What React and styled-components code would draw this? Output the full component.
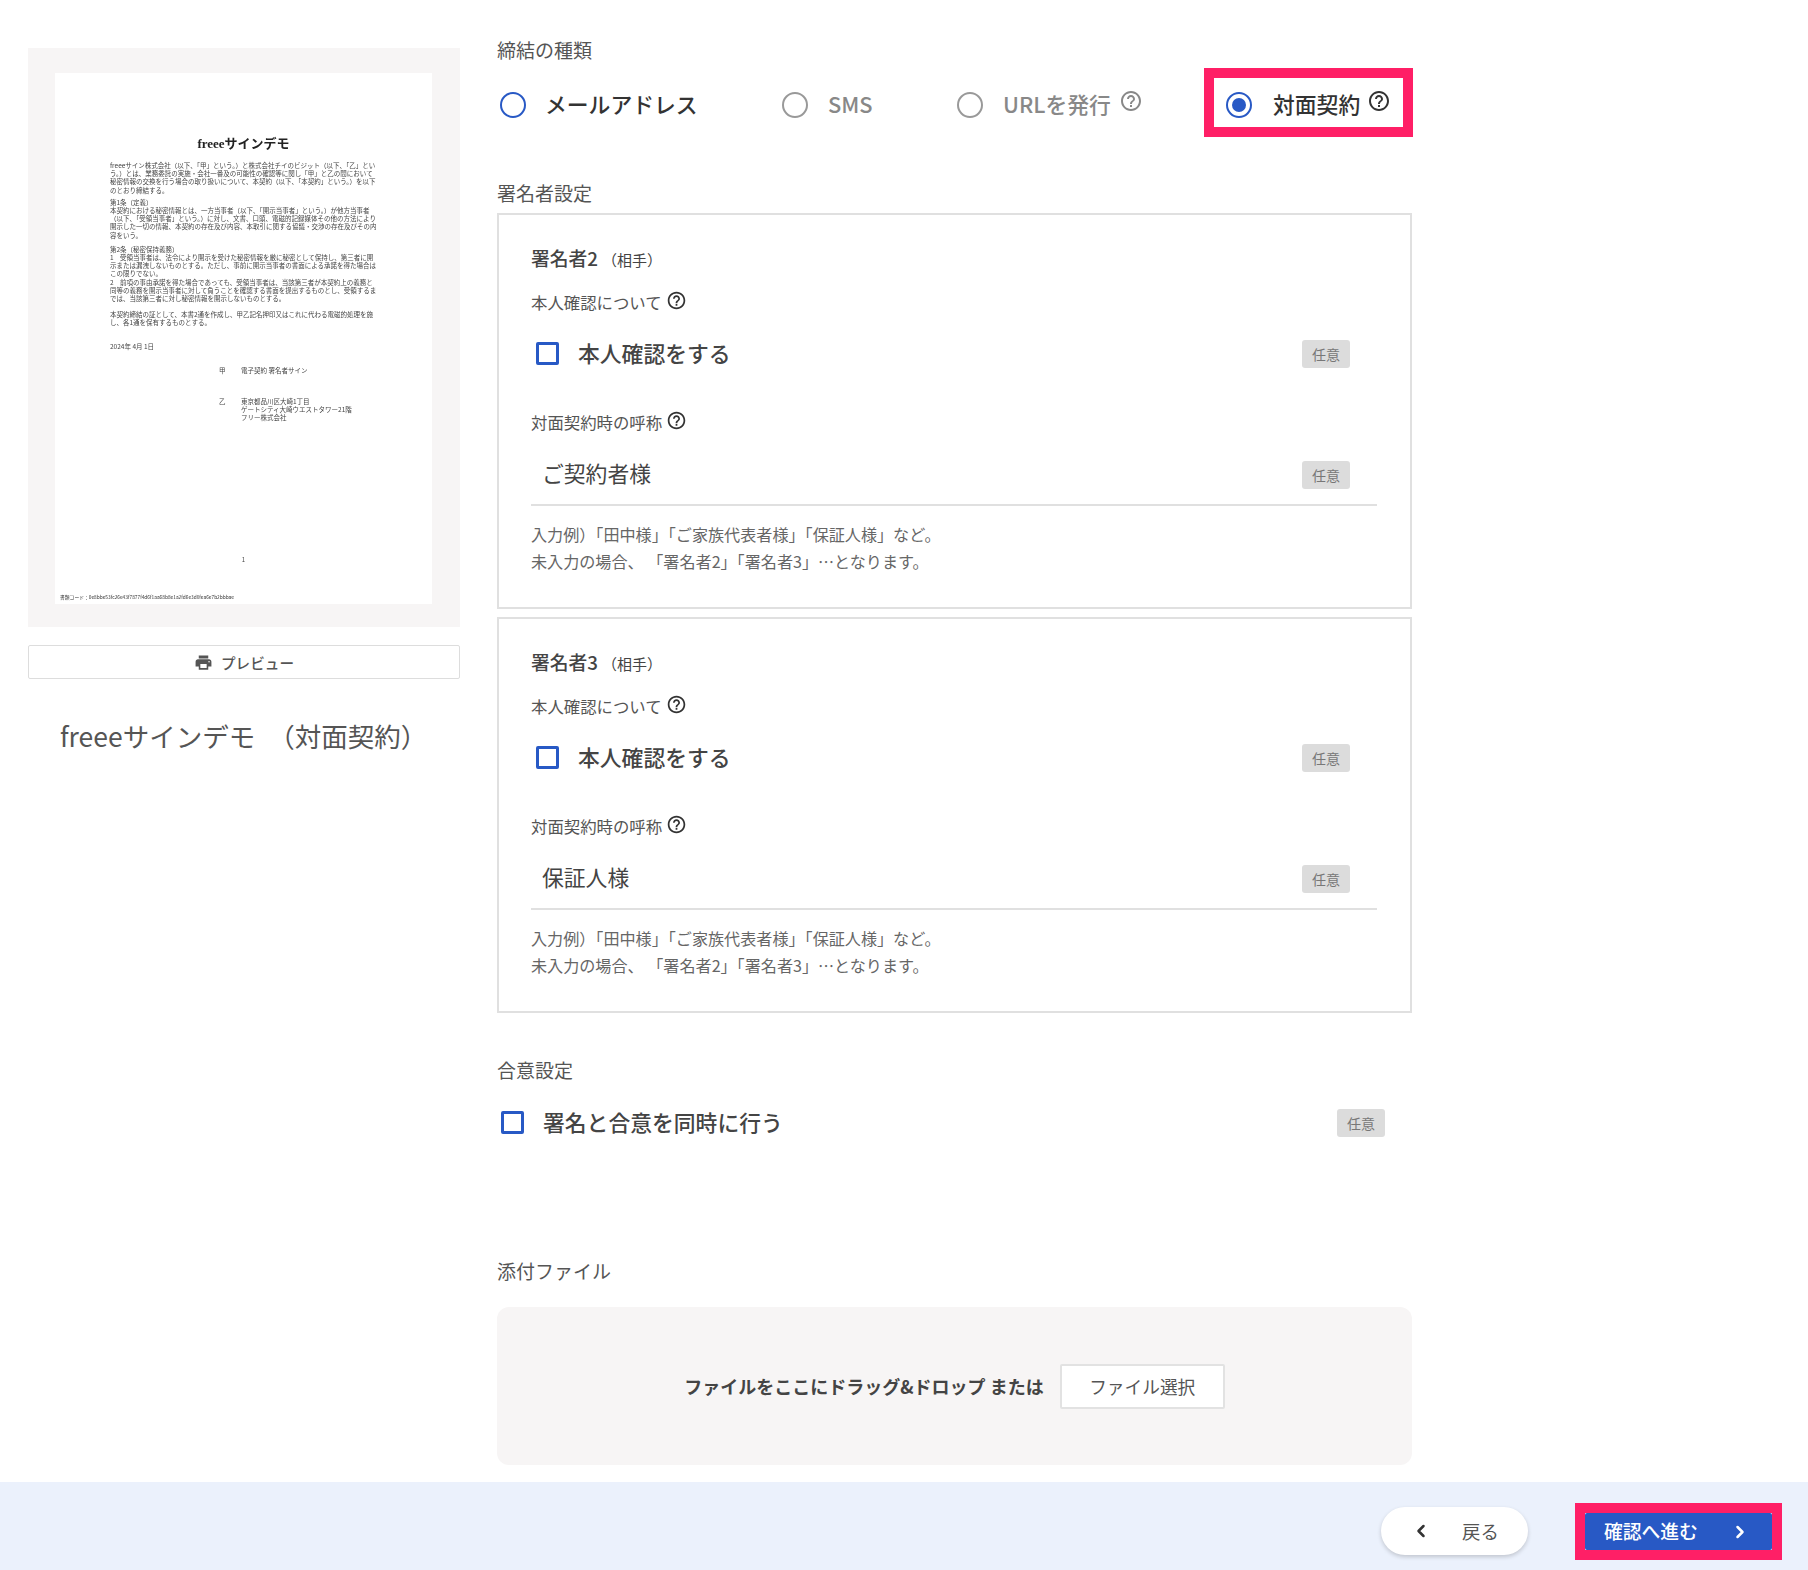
import styled, { createGlobalStyle } from "styled-components";
import { MdHelpOutline, MdPrint } from "react-icons/md";
import { ChevronLeft, ChevronRight } from "lucide-react";

const GlobalStyle = createGlobalStyle`
  html, body { margin: 0; padding: 0; background: #fff; }
  body { font-family: "Noto Sans CJK JP", "Noto Sans", sans-serif; color: #333; }
  * { box-sizing: border-box; }
`;

const Page = styled.div`
  width: 1808px;
  height: 1570px;
  display: flex;
  flex-direction: column;
  overflow: hidden;
`;
const Main = styled.main`
  height: 1482px;
  display: flex;
  gap: 37px;
  padding-left: 28px;
`;
const LeftCol = styled.aside`
  width: 432px;
  padding-top: 48px;
`;
const PreviewPanel = styled.div`
  height: 579px;
  padding: 25px 28px 23px 27px;
  background: #f7f5f5;
`;
const DocPage = styled.div`
  height: 100%;
  display: flex;
  flex-direction: column;
  padding: 64px 55px 4px 55px;
  background: #fff;
  font-size: 6.5px;
  line-height: 8.2px;
  color: #444;
  filter: blur(0.4px);
`;
const DocTitle = styled.div`
  font-family: "Liberation Serif", "Noto Sans CJK JP", serif;
  font-weight: 700;
  font-size: 13px;
  line-height: 14px;
  text-align: center;
  color: #222;
  margin-bottom: 10px;
`;
const DocPara = styled.p`
  margin: 0 0 ${(p) => p.$after}px;
`;
const DocSign = styled.div`
  display: grid;
  grid-template-columns: 22px 1fr;
  margin: ${(p) => p.$top}px 0 0 109px;
`;
const DocNumber = styled.div`
  margin-top: auto;
  text-align: center;
  font-size: 6px;
`;
const DocCode = styled.div`
  margin: 30px 0 0 -50px;
  font-size: 4.8px;
  line-height: 6px;
  white-space: nowrap;
  color: #333;
`;
const PreviewButton = styled.button`
  width: 100%;
  height: 34px;
  margin-top: 18px;
  display: flex;
  align-items: center;
  justify-content: center;
  gap: 8px;
  background: #fff;
  border: 1px solid #ddd;
  border-radius: 2px;
  font-family: inherit;
  font-size: 14.6px;
  font-weight: 500;
  color: #555;
`;
const DocName = styled.h1`
  margin: 39px 0 0 32px;
  font-size: 26.5px;
  line-height: 36px;
  font-weight: 400;
  color: #555;
  white-space: nowrap;
  span {
    margin-left: 13px;
  }
`;

const RightCol = styled.section`
  width: 915px;
  padding-top: 38px;
`;
const SectionLabel = styled.div`
  font-size: 19px;
  line-height: 24px;
  color: #555;
  margin-top: ${(p) => p.$top || 0}px;
`;
const RadioRow = styled.div`
  display: grid;
  grid-template-columns: 282px 175px 247px 209px;
  height: 69px;
  margin-top: 6px;
  padding-left: 3px;
`;
const RadioItem = styled.label`
  display: flex;
  align-items: center;
  gap: ${(p) => (p.$muted ? 20 : 19)}px;
  padding-top: 5px;
  font-size: 21.8px;
  font-weight: 500;
  color: ${(p) => (p.$muted ? "#888" : "#333")};
  white-space: nowrap;
`;
const HighlightRadio = styled(RadioItem)`
  padding: 4px 0 0 12px;
  gap: 21px;
  border: 10px solid #ff1f66;
`;
const RadioText = styled.span`
  margin-top: -3px;
`;
const RadioDot = styled.span`
  width: 26px;
  height: 26px;
  flex: none;
  display: flex;
  align-items: center;
  justify-content: center;
  border-radius: 50%;
  border: 2.5px solid ${(p) => (p.$muted ? "#999" : "#2859c5")};
  &::after {
    content: "";
    display: ${(p) => (p.$on ? "block" : "none")};
    width: 14px;
    height: 14px;
    border-radius: 50%;
    background: #2859c5;
  }
`;
const HelpIcon = styled(MdHelpOutline)`
  flex: none;
  margin: -8px 0 0 ${(p) => p.$gap}px;
  color: ${(p) => (p.$muted ? "#888" : "#333")};
`;
const SignerCard = styled.div`
  height: 396px;
  margin-top: 8px;
  padding: 30px 33px 0 32px;
  border: 2px solid #e0e0e0;
`;
const SignerTitle = styled.div`
  font-size: 18.8px;
  line-height: 26px;
  font-weight: 500;
  color: #444;
  small {
    font-size: 15px;
    font-weight: 400;
    margin-left: 4px;
  }
`;
const FieldLabel = styled.div`
  display: flex;
  align-items: center;
  height: 22px;
  margin-top: ${(p) => p.$top}px;
  font-size: 16.4px;
  color: #555;
  svg {
    margin: -4px 0 0 4px;
    color: #333;
  }
`;
const CheckRow = styled.div`
  display: flex;
  align-items: center;
  height: 40px;
  margin-top: ${(p) => p.$top}px;
  padding: 0 ${(p) => p.$right}px 0 ${(p) => p.$left}px;
  font-size: 21.8px;
  font-weight: 500;
  color: #444;
`;
const CheckBox = styled.span`
  width: 23px;
  height: 23px;
  flex: none;
  margin: 2px 19px 0 0;
  border: 3px solid #2859c5;
  border-radius: 2px;
`;
const OptionalTag = styled.span`
  width: 48px;
  height: 28px;
  flex: none;
  margin: 4px 0 0 auto;
  display: flex;
  align-items: center;
  justify-content: center;
  background: #dcdcdc;
  border-radius: 3px;
  font-size: 14px;
  font-weight: 400;
  color: #777;
`;
const InputRow = styled.div`
  display: flex;
  align-items: center;
  height: 62px;
  margin-top: 11px;
  padding: 0 27px 3px 11px;
  border-bottom: 2px solid #e0e0e0;
  font-size: 21.8px;
  color: #444;
`;
const HelpText = styled.p`
  margin: 15px 0 0;
  font-size: 16.1px;
  line-height: 27px;
  color: #666;
`;
const DropZone = styled.div`
  height: 158px;
  margin-top: 24px;
  display: flex;
  align-items: center;
  justify-content: center;
  gap: 16px;
  background: #f7f5f5;
  border-radius: 12px;
  font-size: 18px;
  font-weight: 700;
  color: #444;
`;
const SelectButton = styled.button`
  width: 165px;
  height: 45px;
  background: #fff;
  border: 2px solid #e2e2e2;
  border-radius: 2px;
  font-family: inherit;
  font-size: 17.7px;
  color: #555;
`;

const Footer = styled.footer`
  height: 88px;
  display: flex;
  justify-content: flex-end;
  align-items: flex-start;
  gap: 47px;
  padding: 21px 26px 0 0;
  background: #ebf1fc;
`;
const BackButton = styled.button`
  width: 147px;
  height: 48px;
  margin-top: 4px;
  display: flex;
  align-items: center;
  padding: 0 0 0 30px;
  gap: 31px;
  background: #fff;
  border: none;
  border-radius: 24px;
  box-shadow: 0 2px 4px rgba(0, 0, 0, 0.18);
  font-family: inherit;
  font-size: 18.4px;
  color: #555;
`;
const NextFrame = styled.div`
  width: 207px;
  height: 57px;
  border: 10px solid #ff1f66;
`;
const NextButton = styled.button`
  width: 100%;
  height: 100%;
  display: flex;
  align-items: center;
  justify-content: space-between;
  padding: 0 22px 3px 19px;
  background: #2859c5;
  border: none;
  border-radius: 2px;
  font-family: inherit;
  font-size: 18.8px;
  font-weight: 500;
  color: #fff;
  svg {
    margin-top: 3px;
  }
`;

const SignerBlock = ({ num, name }) => (
  <SignerCard>
    <SignerTitle>署名者{num}<small>（相手）</small></SignerTitle>
    <FieldLabel $top={18}>本人確認について<MdHelpOutline size={21} /></FieldLabel>
    <CheckRow $top={19} $left={5} $right={27}>
      <CheckBox />本人確認をする<OptionalTag>任意</OptionalTag>
    </CheckRow>
    <FieldLabel $top={39}>対面契約時の呼称<MdHelpOutline size={21} /></FieldLabel>
    <InputRow>{name}<OptionalTag>任意</OptionalTag></InputRow>
    <HelpText>
      入力例）「田中様」「ご家族代表者様」「保証人様」など。<br />
      未入力の場合、 「署名者2」「署名者3」…となります。
    </HelpText>
  </SignerCard>
);

const App = () => (
  <Page>
    <GlobalStyle />
    <Main>
      <LeftCol>
        <PreviewPanel>
          <DocPage>
            <DocTitle>freeeサインデモ</DocTitle>
            <DocPara $after={4}>
              freeeサイン株式会社（以下、「甲」という。）と株式会社チイのビジット（以下、「乙」という。）とは、業務委託の実施・会社一番及の可能性の確認等に関し「甲」と乙の間において秘密情報の交換を行う場合の取り扱いについて、本契約（以下、「本契約」という。）を以下のとおり締結する。
            </DocPara>
            <DocPara $after={6}>
              第1条（定義）<br />
              　本契約における秘密情報とは、一方当事者（以下、「開示当事者」という。）が他方当事者（以下、「受領当事者」という。）に対し、文書、口頭、電磁的記録媒体その他の方法により開示した一切の情報、本契約の存在及び内容、本取引に関する協議・交渉の存在及びその内容をいう。
            </DocPara>
            <DocPara $after={8}>
              第2条（秘密保持義務）<br />
              1　受領当事者は、法令により開示を受けた秘密情報を厳に秘密として保持し、第三者に開示または漏洩しないものとする。ただし、事前に開示当事者の書面による承諾を得た場合はこの限りでない。<br />
              2　前項の事由承諾を得た場合であっても、受領当事者は、当該第三者が本契約上の義務と同等の義務を開示当事者に対して負うことを確認する書面を提出するものとし、受領するまでは、当該第三者に対し秘密情報を開示しないものとする。
            </DocPara>
            <DocPara $after={15}>
              本契約締結の証として、本書2通を作成し、甲乙記名押印又はこれに代わる電磁的処理を施し、各1通を保有するものとする。
            </DocPara>
            <DocPara $after={7}>2024年 4月 1日</DocPara>
            <DocSign $top={9}><span>甲</span><span>電子契約 署名者サイン</span></DocSign>
            <DocSign $top={23}>
              <span>乙</span>
              <span>東京都品川区大崎1丁目<br />ゲートシティ大崎ウエストタワー21階<br />フリー株式会社</span>
            </DocSign>
            <DocNumber>1</DocNumber>
            <DocCode>書類コード：0e8bbe53fc26e43f7877f4d6f1aa68b8e1a2fd6e3d0fea6e7b2bbbae</DocCode>
          </DocPage>
        </PreviewPanel>
        <PreviewButton><MdPrint size={19} />プレビュー</PreviewButton>
        <DocName>freeeサインデモ<span>（対面契約）</span></DocName>
      </LeftCol>

      <RightCol>
        <SectionLabel>締結の種類</SectionLabel>
        <RadioRow>
          <RadioItem><RadioDot /><RadioText>メールアドレス</RadioText></RadioItem>
          <RadioItem $muted><RadioDot $muted /><RadioText>SMS</RadioText></RadioItem>
          <RadioItem $muted>
            <RadioDot $muted /><RadioText>URLを発行</RadioText><HelpIcon $muted size={24} $gap={-12} />
          </RadioItem>
          <HighlightRadio>
            <RadioDot $on /><RadioText>対面契約</RadioText><HelpIcon size={24} $gap={-14} />
          </HighlightRadio>
        </RadioRow>

        <SectionLabel $top={44}>署名者設定</SectionLabel>
        <SignerBlock num={2} name="ご契約者様" />
        <SignerBlock num={3} name="保証人様" />

        <SectionLabel $top={45}>合意設定</SectionLabel>
        <CheckRow $top={19} $left={4} $right={27}>
          <CheckBox />署名と合意を同時に行う<OptionalTag>任意</OptionalTag>
        </CheckRow>

        <SectionLabel $top={118}>添付ファイル</SectionLabel>
        <DropZone>
          ファイルをここにドラッグ&ドロップ または
          <SelectButton>ファイル選択</SelectButton>
        </DropZone>
      </RightCol>
    </Main>
    <Footer>
      <BackButton><ChevronLeft size={20} strokeWidth={3} color="#333" />戻る</BackButton>
      <NextFrame>
        <NextButton>確認へ進む<ChevronRight size={20} strokeWidth={3} /></NextButton>
      </NextFrame>
    </Footer>
  </Page>
);

export default App;
